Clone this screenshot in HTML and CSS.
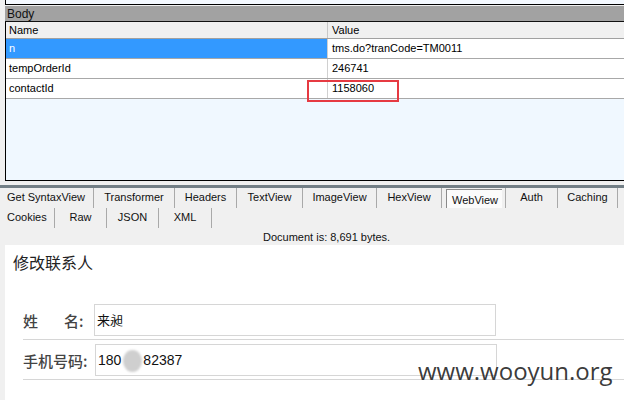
FILE: index.html
```html
<!DOCTYPE html>
<html>
<head>
<meta charset="utf-8">
<link rel="stylesheet" href="styles.css">
</head>
<body>
<div class="top-stub"></div>
<div class="body-panel">
  <div class="body-title">Body</div>
  <div class="grid">
    <div class="row head"><div class="c1">Name</div><div class="c2">Value</div></div>
    <div class="row sel"><div class="c1">n</div><div class="c2">tms.do?tranCode=TM0011</div></div>
    <div class="row"><div class="c1">tempOrderId</div><div class="c2">246741</div></div>
    <div class="row"><div class="c1">contactId</div><div class="c2">1158060</div></div>
  </div>
</div>
<div class="tabs">
  <div class="tabrow r1">
    <div class="tab">Get SyntaxView</div>
    <div class="tab">Transformer</div>
    <div class="tab">Headers</div>
    <div class="tab">TextView</div>
    <div class="tab">ImageView</div>
    <div class="tab">HexView</div>
    <div class="tab active"><span>WebView</span></div>
    <div class="tab">Auth</div>
    <div class="tab">Caching</div>
  </div>
  <div class="tabrow r2">
    <div class="tab">Cookies</div>
    <div class="tab">Raw</div>
    <div class="tab">JSON</div>
    <div class="tab">XML</div>
  </div>
</div>
<div class="docinfo">Document is: 8,691 bytes.</div>
<div class="web">
  <div class="title">修改联系人</div>
  <div class="form">
    <div class="frow">
      <div class="label"><span class="sp">姓</span>名:</div>
      <div class="input"><span class="cjk">来昶</span></div>
    </div>
    <div class="frow">
      <div class="label">手机号码:</div>
      <div class="input">180<span class="blur"></span>82387</div>
    </div>
  </div>
</div>
<div class="redbox"></div>
<div class="watermark">www.wooyun.org</div>
</body>
</html>
```
FILE: styles.css
```css
html, body {
  margin: 0;
  padding: 0;
}
body {
  width: 624px;
  height: 400px;
  overflow: hidden;
  background: #f0f0f0;
  font-family: "Liberation Sans", Arial, sans-serif;
  font-size: 11px;
  color: #000;
  position: relative;
}
.top-stub {
  height: 4px;
  margin-left: 5px;
  border-left: 1px solid #000;
  border-bottom: 1px solid #000;
  background: #f4f9ff;
}
.body-panel {
  margin-left: 5px;
  margin-top: 1px;
}
.body-title {
  height: 15px;
  line-height: 16px;
  background: #a2a2a2;
  padding-left: 2px;
  font-size: 12px;
  color: #111;
  border-bottom: 1px solid #111;
}
.grid {
  height: 158px;
  background: #f0f8ff;
  border-left: 1px solid #000;
  border-bottom: 1px solid #000;
}
.row {
  display: flex;
  height: 19px;
  line-height: 19px;
  background: #fff;
  border-bottom: 1px solid #a8a8a8;
}
.row .c1 {
  width: 318px;
  padding-left: 3px;
  border-right: 1px solid #d0d0d0;
}
.row .c2 {
  padding-left: 4px;
}
.row.head {
  height: 16px;
  line-height: 16px;
  background: #f0f0f0;
  border-bottom: 1px solid #a0a0a0;
}
.row.head .c1 {
  border-right-color: #c8c8c8;
}
.row.sel .c1 {
  background: #3399ff;
  color: #fff;
}
.tabs {
  margin-top: 4px;
  border-top: 3px solid #737f86;
}
.tabrow {
  display: flex;
  height: 20px;
  line-height: 19px;
}
.tab {
  border-right: 1px solid #a9a9a9;
  text-align: center;
  box-sizing: border-box;
  color: #111;
}
.r1 .tab:nth-child(1) { width: 94px; text-align: left; padding-left: 7px; }
.r1 .tab:nth-child(2) { width: 81px; }
.r1 .tab:nth-child(3) { width: 62px; }
.r1 .tab:nth-child(4) { width: 66px; }
.r1 .tab:nth-child(5) { width: 74px; }
.r1 .tab:nth-child(6) { width: 65px; }
.r1 .tab:nth-child(7) { width: 64px; }
.r1 .tab:nth-child(8) { width: 52px; }
.r1 .tab:nth-child(9) { width: 60px; }
.r2 .tab:nth-child(1) { width: 55px; text-align: left; padding-left: 7px; }
.r2 .tab:nth-child(2) { width: 52px; }
.r2 .tab:nth-child(3) { width: 52px; }
.r2 .tab:nth-child(4) { width: 53px; }
.tab.active {
  padding-left: 4px;
  text-align: left;
}
.tab.active span {
  display: inline-block;
  height: 19px;
  margin-top: 1px;
  padding: 0 5px;
  line-height: 20px;
  background: #fbfbfb;
  border-left: 1px solid #8a8a8a;
  border-top: 1px solid #8a8a8a;
  box-sizing: border-box;
  width: 56px;
}
.docinfo {
  height: 17px;
  line-height: 18px;
  padding-left: 263px;
  color: #111;
}
.web {
  margin-left: 5px;
  background: #fff;
  height: 155px;
  font-family: "Noto Sans CJK SC", "Liberation Sans", sans-serif;
  color: #333;
}
.title {
  height: 34px;
  line-height: 34px;
  padding-left: 8px;
  font-size: 16px;
  color: #222;
}
.form {
  margin-top: 21px;
  margin-left: 18px;
}
.frow {
  display: flex;
  align-items: center;
  padding: 4px 0 3px;
  border-bottom: 1px solid #d6d6d6;
}
.label {
  width: 71px;
  font-size: 15px;
  color: #444;
  font-weight: 500;
}
.label .sp {
  letter-spacing: 26px;
}
.input {
  width: 402px;
  height: 32px;
  box-sizing: border-box;
  border: 1px solid #d6d6d6;
  padding-left: 2px;
  line-height: 30px;
  font-size: 14px;
  color: #111;
  font-family: "Liberation Sans", "Noto Sans CJK SC", sans-serif;
}
.input .cjk {
  font-size: 13px;
  font-family: "Noto Sans CJK SC", sans-serif;
}
.frow + .frow .input {
  margin-left: 1px;
}
.blur {
  display: inline-block;
  width: 19px;
  height: 22px;
  margin: 0 1px 0 2px;
  vertical-align: middle;
  border-radius: 50%;
  background: #cfcfcf;
  filter: blur(1px);
}
.redbox {
  position: absolute;
  left: 307px;
  top: 80px;
  width: 92px;
  height: 22px;
  box-sizing: border-box;
  border: 2px solid #e63a42;
}
.watermark {
  position: absolute;
  left: 418px;
  top: 354px;
  font-family: "Open Sans", sans-serif;
  font-size: 24px;
  color: rgba(40, 40, 40, 0.92);
}
```
